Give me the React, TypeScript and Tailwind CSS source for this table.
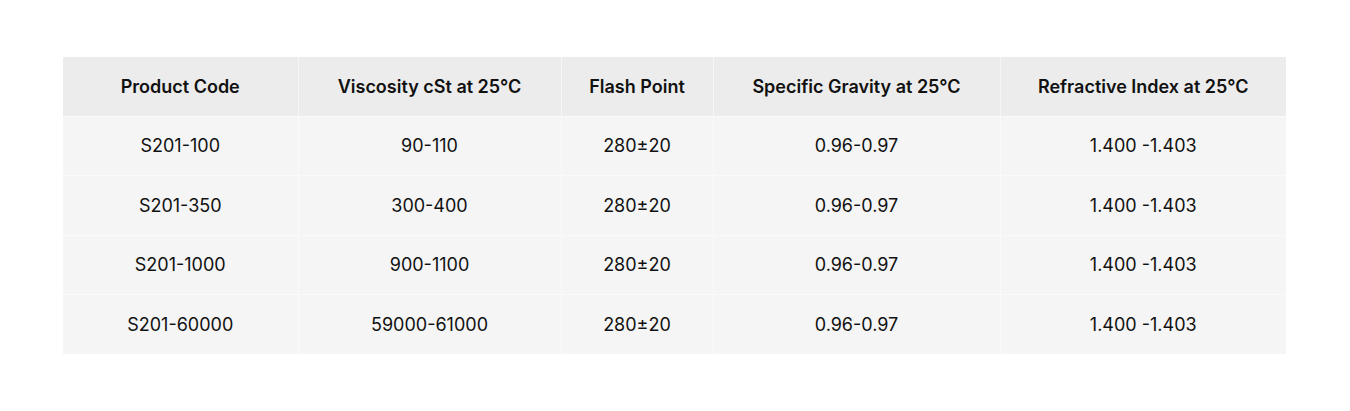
const HEADERS = [
  "Product Code",
  "Viscosity cSt at 25°C",
  "Flash Point",
  "Specific Gravity at 25°C",
  "Refractive Index at 25°C",
];

const WIDTHS = ["w-[235px]", "w-[263px]", "w-[152px]", "w-[287px]", "w-[286px]"];

const ROWS = [
  ["S201-100", "90-110", "280±20", "0.96-0.97", "1.400 -1.403"],
  ["S201-350", "300-400", "280±20", "0.96-0.97", "1.400 -1.403"],
  ["S201-1000", "900-1100", "280±20", "0.96-0.97", "1.400 -1.403"],
  ["S201-60000", "59000-61000", "280±20", "0.96-0.97", "1.400 -1.403"],
];

export default function App() {
  return (
    <div className="w-[1350px] h-[411px] bg-white pt-[57px] pl-[63px] font-['Inter','Liberation_Sans',sans-serif] text-[#111]">
      <table className="border-collapse table-fixed w-[1223px]">
        <thead>
          <tr className="bg-[#ececec] h-[59px]">
            {HEADERS.map((h, i) => (
              <th
                key={h}
                className={`${WIDTHS[i]} border-x border-[#f6f6f6] first:border-l-0 last:border-r-0 text-center text-[18px] font-semibold align-middle pt-px`}
              >
                {h}
              </th>
            ))}
          </tr>
        </thead>
        <tbody>
          {ROWS.map((r) => (
            <tr key={r[0]} className="bg-[#f5f5f5] h-[59.5px] border-t border-[#fafafa]">
              {r.map((c, i) => (
                <td
                  key={i}
                  className="border-x border-[#fafafa] first:border-l-0 last:border-r-0 text-center text-[18px] align-middle"
                >
                  {c}
                </td>
              ))}
            </tr>
          ))}
        </tbody>
      </table>
    </div>
  );
}
